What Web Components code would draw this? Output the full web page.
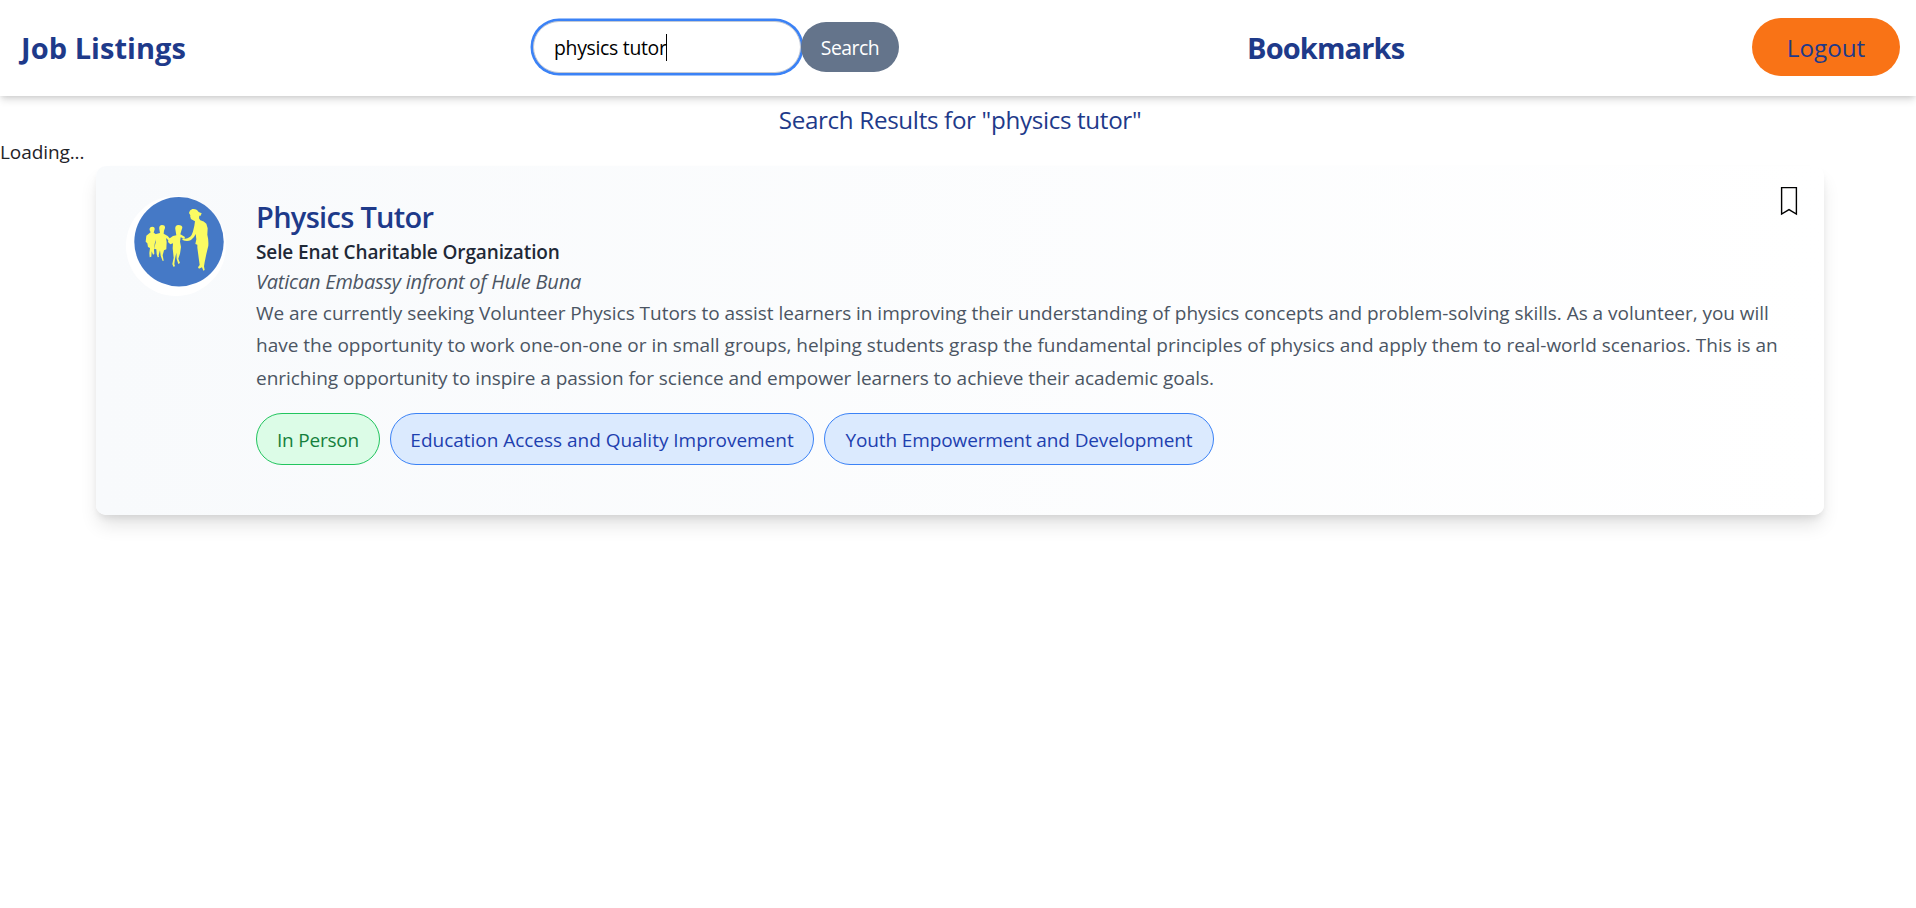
<!DOCTYPE html>
<html lang="en">
<head>
<meta charset="utf-8">
<title>Job Listings</title>
<style>
html,body{margin:0;padding:0}
body{font-family:"Open Sans","Noto Sans",sans-serif;font-size:19px;line-height:30px;color:#1f2328;background:#fff;min-height:100vh;overflow:hidden}
</style>
</head>
<body>
<job-app></job-app>
<script>
const define = (name, html) => customElements.define(name, class extends HTMLElement {
  constructor() {
    super();
    const t = document.createElement('template');
    t.innerHTML = html;
    this.attachShadow({ mode: 'open' }).append(t.content.cloneNode(true));
  }
});

define('search-box', `
<style>
:host{display:flex;align-items:center}
.field{box-sizing:border-box;width:268px;height:52px;border:1px solid #c3c9d4;border-radius:26px;box-shadow:0 0 0 2.5px #3b82f6;display:flex;align-items:center;padding-left:20px;color:#000;font-size:19.4px;letter-spacing:-.3px;background:#fff;white-space:nowrap}
.text{padding-top:2px}
.caret{width:1px;height:27px;background:#000;margin-left:-.5px}
button{position:relative;box-sizing:border-box;width:98px;height:50px;margin:0;padding:2px 0 0;border:0;border-radius:25px;background:#64748b;color:#fff;font:500 19.4px/30px "Open Sans","Noto Sans",sans-serif;letter-spacing:-.5px}
</style>
<div class="field"><span class="text"><slot></slot></span><span class="caret"></span></div>
<button type="button">Search</button>`);

define('site-header', `
<style>
:host{position:relative;box-sizing:border-box;display:grid;grid-template-columns:510px 716px 1fr auto;align-items:center;height:96px;padding:0 16px 2px 21px;background:#fff;color:#1e3a8a;box-shadow:0 5px 7.5px -1.25px rgba(0,0,0,.13),0 2.5px 5px -1.25px rgba(0,0,0,.1)}
.title{font-size:29px;font-weight:700;line-height:40px;padding-top:2px;white-space:nowrap;letter-spacing:.05px}
.marks{letter-spacing:-.85px}
search-box{margin-left:2px}
button{width:148px;height:58px;border:0;border-radius:29px;background:#f97316;color:#1e3a8a;padding:0;font:400 24.2px/35px "Open Sans","Noto Sans",sans-serif;letter-spacing:0}
</style>
<a class="title">Job Listings</a>
<search-box>physics tutor</search-box>
<a class="title marks">Bookmarks</a>
<button type="button">Logout</button>`);

define('org-avatar', `
<style>
:host{display:block;width:100px;height:100px;border-radius:50%;background:#fff}
svg{display:block}
</style>
<svg width="100" height="100" viewBox="0 0 100 100">
<circle cx="53" cy="45.8" r="44.7" fill="#4579c6"/>
<g transform="translate(-6 -11) scale(.33333)" fill="#fbfb62">
<path d="M207 84q1-9 10-12 13-2 19 9l9 4-3 7h-4l-1 8 4 6q11 2 18 10l4 14-1 19q4 15 3 33l-6 25-5 25-2 12 2 11-4 2-4-10-9 4-3-4 5-7-3-22-4-30v-9l-6-2 3-14-2-16q-4 11-14 18-11 6-26 0l1-5q13 3 20-3 9-6 12-22l3-13 2-13-7-4q-9-4-7-14z"/>
<path d="M166 133q-2-12 9-13 12 0 12 8l-3 9-3 11 14 8-2 5-11-4-2 13 3 16-3 20-5 15 5 13-5 3-5-15-1-19-4 19-2 15 2 7-5 1-3-8 4-19-3-28 1-15-8 3-7-7 2-9 13-9 10-2z"/>
<path d="M118 133q-2-12 8-13 10 0 9 9l-3 8-1 9 12 7 8 9-4 5-9-8 2 12-1 22-7 3-4 15 3 16-3 1-6-16-2-16-4 15 1 5-4 1-3-10-1-14-7-2 5-18 0-11-2 8-5-1-1-13 9-9 12-3z"/>
<path d="M89 136q-2-10 8-11 8 0 7 8l-3 10 7 5 0 11-4 18-2 19 1 11-4 2-4-10-1 16-5 2-1-13 2-15-6-3-2-11-5-5 2-18 10-8 3-2z"/>
</g>
</svg>`);

define('job-tag', `
<style>
:host{box-sizing:border-box;display:flex;align-items:center;justify-content:center;height:52px;padding-top:1px;border:1px solid #3b82f6;border-radius:26px;background:#dbeafe;color:#1e40af;white-space:nowrap}
:host([tone=green]){border-color:#22c55e;background:#dcfce7;color:#15803d}
</style><slot></slot>`);

define('job-card', `
<style>
:host{position:relative;box-sizing:border-box;display:flex;align-items:flex-start;height:349px;padding:30px 27px 0 30px;border-radius:10px;background:linear-gradient(to right,#f8fafc,#fff);box-shadow:0 12.5px 18.75px -3.75px rgba(0,0,0,.12),0 5px 7.5px -2.5px rgba(0,0,0,.08)}
.body{margin:1px 0 0 30px;white-space:nowrap}
.mark{position:absolute;right:26px;top:20px}
.tags{display:flex;gap:10px;margin-top:18px}
</style>
<slot name="avatar"></slot>
<div class="body"><slot></slot><div class="tags"><slot name="tag"></slot></div></div>
<svg class="mark" width="18" height="30" viewBox="0 0 18 30"><path d="M1.6 1.6H16.4V28L9 23.6L1.6 28Z" fill="none" stroke="#000" stroke-width="1.4"/></svg>`);

define('job-app', `
<style>
:host{display:block}
.results{margin:0;padding:8px 0 0 4px;text-align:center;font-size:24.2px;font-weight:400;line-height:32px;letter-spacing:-.33px;color:#1e3a8a}
.loading{letter-spacing:-.086px;height:29px;padding-top:1px}
job-card{margin:0 92px 0 96px}
h2{margin:0;font-size:29px;line-height:40px;font-weight:600;letter-spacing:-.7px;color:#1e3a8a}
.org{font-weight:600;letter-spacing:-.115px;color:#1f2937}
.place{font-style:italic;font-size:20px;letter-spacing:-.22px;color:#4b5563}
.desc{color:#4b5563}
.desc span{display:block;line-height:32px}
.desc span:last-child{line-height:34px}
</style>
<site-header></site-header>
<h1 class="results">Search Results for "physics tutor"</h1>
<div class="loading">Loading...</div>
<job-card>
<org-avatar slot="avatar"></org-avatar>
<h2>Physics Tutor</h2>
<div class="org">Sele Enat Charitable Organization</div>
<div class="place">Vatican Embassy infront of Hule Buna</div>
<div class="desc"><span style="letter-spacing:-.032px">We are currently seeking Volunteer Physics Tutors to assist learners in improving their understanding of physics concepts and problem-solving skills. As a volunteer, you will</span>
<span style="letter-spacing:.006px">have the opportunity to work one-on-one or in small groups, helping students grasp the fundamental principles of physics and apply them to real-world scenarios. This is an</span>
<span style="letter-spacing:-.043px">enriching opportunity to inspire a passion for science and empower learners to achieve their academic goals.</span></div>
<job-tag slot="tag" tone="green" style="width:124px;letter-spacing:-.218px">In Person</job-tag>
<job-tag slot="tag" style="width:424px;letter-spacing:-.022px">Education Access and Quality Improvement</job-tag>
<job-tag slot="tag" style="width:390px;letter-spacing:-.12px">Youth Empowerment and Development</job-tag>
</job-card>`);
</script>
</body>
</html>
